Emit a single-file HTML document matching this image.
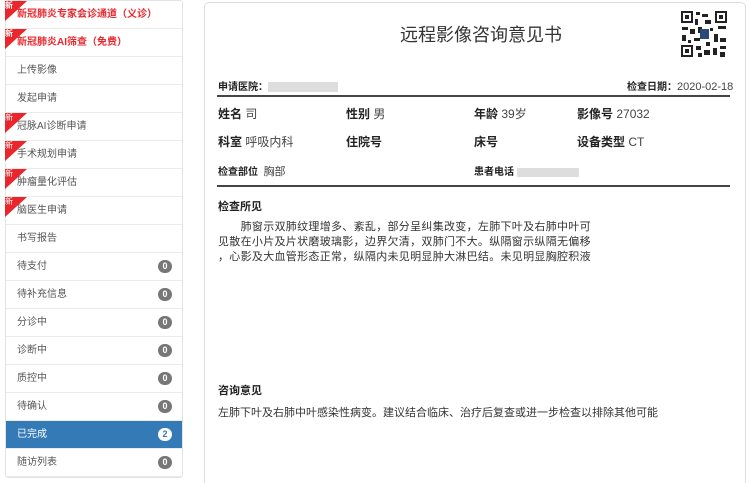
<!DOCTYPE html><html><head><meta charset="utf-8"><style>
*{margin:0;padding:0;box-sizing:border-box}
html,body{width:750px;height:483px;overflow:hidden}
body{background:#fff;font-family:"Liberation Sans","Noto Sans CJK SC",sans-serif;position:relative;color:#333}
.sb{position:absolute;left:5px;top:0;width:178px;border:1px solid #e3e3e3;border-radius:3px}
.it{height:28px;border-bottom:1px solid #eaeaea;position:relative;font-size:10px;line-height:27px;padding-left:11px;color:#555}
.it.red{color:#e8262c;font-weight:bold}
.it.act{background:#337ab7;color:#fff}
.new{position:absolute;left:-1px;top:0;width:0;height:0;border-top:20px solid #e8262c;border-right:22px solid transparent}
.new span{position:absolute;left:0;top:-21px;font-size:8px;color:#fff;line-height:12px}
.bd{position:absolute;right:10px;top:7px;width:14px;height:13px;border-radius:7px;background:#777;color:#fff;font-size:9px;line-height:13px;text-align:center;font-weight:bold}
.act .bd{background:#fff;color:#337ab7}
.main{position:absolute;left:204px;top:2px;width:542px;height:481px;border:1px solid #ddd;border-bottom:none;border-radius:5px 5px 0 0}
.a{position:absolute;white-space:nowrap}
.l{font-size:12px;font-weight:bold;color:#222}
.v{font-size:12px;color:#444;font-weight:normal}
.s{font-size:10px;font-weight:bold;color:#222}
</style></head><body>
<div class="sb">
<div class="it red"><div class="new"><span>新</span></div>新冠肺炎专家会诊通道（义诊）</div>
<div class="it red"><div class="new"><span>新</span></div>新冠肺炎AI筛查（免费）</div>
<div class="it">上传影像</div>
<div class="it">发起申请</div>
<div class="it"><div class="new"><span>新</span></div>冠脉AI诊断申请</div>
<div class="it"><div class="new"><span>新</span></div>手术规划申请</div>
<div class="it"><div class="new"><span>新</span></div>肿瘤量化评估</div>
<div class="it"><div class="new"><span>新</span></div>脑医生申请</div>
<div class="it">书写报告</div>
<div class="it">待支付<div class="bd">0</div></div>
<div class="it">待补充信息<div class="bd">0</div></div>
<div class="it">分诊中<div class="bd">0</div></div>
<div class="it">诊断中<div class="bd">0</div></div>
<div class="it">质控中<div class="bd">0</div></div>
<div class="it">待确认<div class="bd">0</div></div>
<div class="it act">已完成<div class="bd">2</div></div>
<div class="it">随访列表<div class="bd">0</div></div>
</div>
<div class="main"></div>
<div class="a" style="left:400px;top:21px;font-size:18px;color:#333">远程影像咨询意见书</div>
<svg class="a" style="left:680px;top:10px" width="48" height="48" viewBox="0 0 48 48">
<rect width="48" height="48" fill="#fff"/>
<g fill="#222"><rect x="1" y="1" width="12" height="12"/><rect x="35" y="1" width="12" height="12"/><rect x="1" y="35" width="12" height="12"/></g>
<g fill="#fff"><rect x="3" y="3" width="8" height="8"/><rect x="37" y="3" width="8" height="8"/><rect x="3" y="37" width="8" height="8"/></g>
<g fill="#222"><rect x="5" y="5" width="4" height="4"/><rect x="39" y="5" width="4" height="4"/><rect x="5" y="39" width="4" height="4"/>
<rect x="16" y="2" width="4" height="3"/><rect x="22" y="4" width="6" height="3"/><rect x="15" y="9" width="3" height="6"/><rect x="25" y="10" width="6" height="4"/>
<rect x="2" y="17" width="6" height="3"/><rect x="10" y="19" width="5" height="5"/><rect x="18" y="17" width="4" height="6"/><rect x="38" y="16" width="8" height="3"/>
<rect x="2" y="25" width="4" height="6"/><rect x="14" y="28" width="6" height="3"/><rect x="34" y="24" width="4" height="8"/><rect x="40" y="28" width="6" height="4"/>
<rect x="16" y="36" width="5" height="4"/><rect x="24" y="40" width="6" height="5"/><rect x="33" y="38" width="4" height="7"/><rect x="40" y="36" width="6" height="3"/><rect x="18" y="43" width="4" height="4"/><rect x="40" y="42" width="5" height="5"/>
<rect x="30" y="18" width="3" height="3"/><rect x="8" y="30" width="3" height="3"/><rect x="26" y="32" width="4" height="4"/></g>
<rect x="20" y="19" width="9" height="10" fill="#2b4a7a"/></svg>
<div class="a s" style="left:218px;top:78px">申请医院：<span style="display:inline-block;width:70px;height:10px;background:#ddd;vertical-align:middle"></span></div>
<div class="a s" style="left:627px;top:78px">检查日期：<span class="v" style="font-size:11px;font-weight:normal">2020-02-18</span></div>
<div style="position:absolute;left:217px;top:95px;width:513px;height:2px;background:#444"></div>
<div class="a l" style="left:218px;top:105px">姓名 <span class="v">司</span></div>
<div class="a l" style="left:346px;top:105px">性别 <span class="v">男</span></div>
<div class="a l" style="left:474px;top:105px">年龄 <span class="v">39岁</span></div>
<div class="a l" style="left:577px;top:105px">影像号 <span class="v">27032</span></div>
<div class="a l" style="left:218px;top:133px">科室 <span class="v">呼吸内科</span></div>
<div class="a l" style="left:346px;top:133px">住院号</div>
<div class="a l" style="left:474px;top:133px">床号</div>
<div class="a l" style="left:577px;top:133px">设备类型 <span class="v">CT</span></div>
<div class="a s" style="left:218px;top:163px">检查部位 &nbsp;<span class="v" style="font-size:11px">胸部</span></div>
<div class="a s" style="left:474px;top:163px">患者电话 <span style="display:inline-block;width:62px;height:9px;background:#ddd;vertical-align:middle"></span></div>
<div style="position:absolute;left:217px;top:185px;width:513px;height:2px;background:#444"></div>
<div class="a l" style="left:218px;top:198px;font-size:11px">检查所见</div>
<div class="a" style="left:218px;top:220px;width:380px;white-space:normal;font-size:11px;letter-spacing:0.3px;line-height:15px;color:#333">&emsp;&emsp;肺窗示双肺纹理增多、紊乱，部分呈纠集改变，左肺下叶及右肺中叶可<br>见散在小片及片状磨玻璃影，边界欠清，双肺门不大。纵隔窗示纵隔无偏移<br>，心影及大血管形态正常，纵隔内未见明显肿大淋巴结。未见明显胸腔积液</div>
<div class="a l" style="left:218px;top:382px;font-size:11px">咨询意见</div>
<div class="a" style="left:218px;top:404px;font-size:11px;color:#333">左肺下叶及右肺中叶感染性病变。建议结合临床、治疗后复查或进一步检查以排除其他可能</div>
</body></html>
